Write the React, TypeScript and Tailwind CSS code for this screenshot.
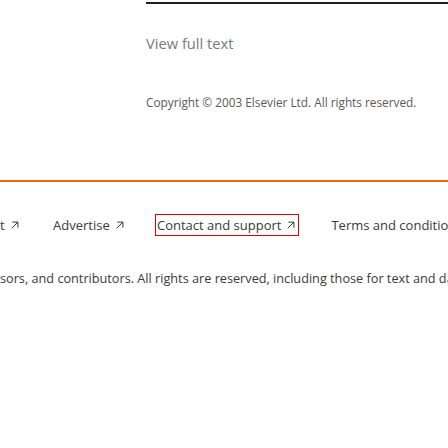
import React from "react";

function ExtIcon() {
  return (
    <svg
      viewBox="0 0 24 24"
      className="ml-[5px] inline-block h-[10px] w-[10px] text-[#333333]"
      fill="none"
      stroke="currentColor"
      strokeWidth={2.4}
      strokeLinecap="square"
    >
      <path d="M5 19 18 6" />
      <path d="M7 5h12v12" />
    </svg>
  );
}

const links = [
  { label: "t", cls: "w-[53px]" },
  { label: "Advertise", cls: "w-[102px]" },
];

export default function App() {
  return (
    <div className="h-[448px] w-[448px] overflow-hidden bg-white font-['Open_Sans',sans-serif]">
      <div className="pl-[146px]">
        <div className="mt-[2px] h-[2px] bg-[#1f1f1f]" />
        <div className="pt-[29px] text-[14.7px] leading-[20px] text-[#7a7a7a]">
          View full text
        </div>
        <div className="pt-[41px] text-[11.8px] leading-[16px] text-[#5a5a5a]">
          Copyright © 2003 Elsevier Ltd. All rights reserved.
        </div>
      </div>

      <div className="mt-[70px] h-[2px] bg-[#eb6500]" />

      <div className="mt-[32px] flex items-center whitespace-nowrap text-[13px] leading-[20px] text-[#3a3a3a]">
        {links.map((l) => (
          <span key={l.label} className={`flex shrink-0 items-center ${l.cls}`}>
            {l.label}
            <ExtIcon />
          </span>
        ))}
        <span className="flex h-[22px] shrink-0 items-center border border-[#e00000] pl-[1px] pr-[2px]">
          Contact and support
          <ExtIcon />
        </span>
        <span className="ml-[32px] shrink-0">Terms and conditions</span>
      </div>

      <div className="mt-[32px] whitespace-nowrap text-[12.7px] leading-[20px] text-[#3a3a3a]">
        sors, and contributors. All rights are reserved, including those for text and data mining, AI training, and similar technologies.
      </div>
    </div>
  );
}
